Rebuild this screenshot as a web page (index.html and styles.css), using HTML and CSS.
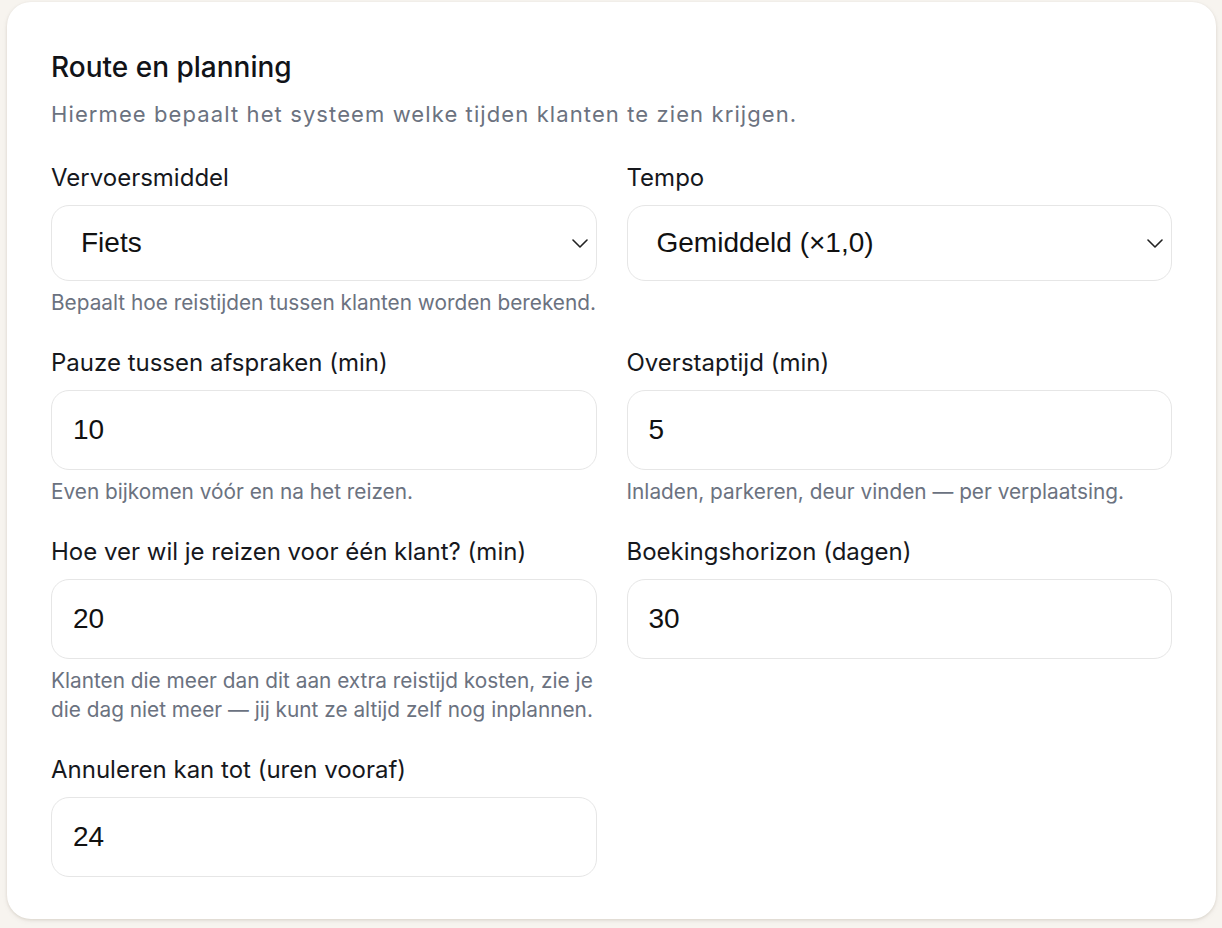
FILE: index.html
```html
<!doctype html>
<html>
  <head>
    <meta charset="utf-8" />
    <title>Route en planning</title>
    <link rel="stylesheet" href="styles.css">
  </head>
  <body>
    <div class="card">
      <h1>Route en planning</h1>
      <p class="intro">Hiermee bepaalt het systeem welke tijden klanten te zien krijgen.</p>
      <div class="fields">
        <div class="field">
          <label>Vervoersmiddel</label>
          <div class="select">
            <span>Fiets</span>
            <svg class="chevron" width="16" height="9" viewBox="0 0 16 9"><path d="M1 1l7 7 7-7" fill="none" stroke="#222" stroke-width="1.6" stroke-linecap="round" stroke-linejoin="round"/></svg>
          </div>
          <p class="help">Bepaalt hoe reistijden tussen klanten worden berekend.</p>
        </div>
        <div class="field">
          <label>Tempo</label>
          <div class="select">
            <span>Gemiddeld (×1,0)</span>
            <svg class="chevron" width="16" height="9" viewBox="0 0 16 9"><path d="M1 1l7 7 7-7" fill="none" stroke="#222" stroke-width="1.6" stroke-linecap="round" stroke-linejoin="round"/></svg>
          </div>
        </div>
        <div class="field">
          <label>Pauze tussen afspraken (min)</label>
          <input type="text" value="10">
          <p class="help">Even bijkomen vóór en na het reizen.</p>
        </div>
        <div class="field">
          <label>Overstaptijd (min)</label>
          <input type="text" value="5">
          <p class="help">Inladen, parkeren, deur vinden — per verplaatsing.</p>
        </div>
        <div class="field">
          <label>Hoe ver wil je reizen voor één klant? (min)</label>
          <input type="text" value="20">
          <p class="help">Klanten die meer dan dit aan extra reistijd kosten, zie je die dag niet meer — jij kunt ze altijd zelf nog inplannen.</p>
        </div>
        <div class="field">
          <label>Boekingshorizon (dagen)</label>
          <input type="text" value="30">
        </div>
        <div class="field">
          <label>Annuleren kan tot (uren vooraf)</label>
          <input type="text" value="24">
        </div>
      </div>
    </div>
  </body>
</html>
```

FILE: styles.css
```css
* { box-sizing: border-box; }
body {
  margin: 0;
  padding: 2px 6px 10px 7px;
  background: #f7f4ef;
  font-family: Inter, "Noto Sans", sans-serif;
  color: #16181d;
}
.card {
  background: #fff;
  border-radius: 24px;
  padding: 48px 44px 42px 44px;
  box-shadow: 0 1px 3px rgba(60, 40, 20, 0.12), 0 2px 6px rgba(60, 40, 20, 0.05);
}
h1 {
  margin: 0;
  font-size: 28px;
  font-weight: 500;
  line-height: 34px;
  color: #111318;
}
.intro {
  margin: 15px 0 35px 0;
  font-size: 22px;
  letter-spacing: 0.05em;
  line-height: 30px;
  color: #6b7280;
}
.fields {
  display: grid;
  grid-template-columns: 1fr 1fr;
  column-gap: 30px;
  row-gap: 32px;
  align-items: start;
}
.field label {
  display: block;
  font-size: 24px;
  line-height: 28px;
  margin-bottom: 13px;
  color: #16181d;
}
.field input,
.select {
  display: block;
  width: 100%;
  border: 1px solid #e6e6e6;
  border-radius: 18px;
  background: #fff;
  font-family: "Liberation Sans", Arial, sans-serif;
  font-size: 28px;
  color: #111;
}
.field input {
  height: 80px;
  padding: 0 21px;
  outline: none;
}
.select {
  position: relative;
  height: 76px;
  padding: 0 29px;
  display: flex;
  align-items: center;
}
.chevron {
  position: absolute;
  right: 8px;
  top: 33px;
}
.help {
  margin: 7px 0 0 0;
  font-size: 20.8px;
  line-height: 29px;
  color: #6b7280;
}
```
